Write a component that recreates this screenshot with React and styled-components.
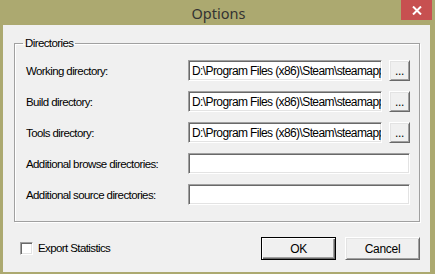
import React from "react";
import styled, { createGlobalStyle } from "styled-components";

const GlobalStyle = createGlobalStyle`
  html, body {
    margin: 0;
    padding: 0;
    background: #aba86f;
  }
`;

const Window = styled.div`
  width: 435px;
  height: 274px;
  box-sizing: border-box;
  background: #aca970;
  display: flex;
  flex-direction: column;
  padding: 0 5px 3px 3px;
  font-family: "Liberation Sans", Arial, sans-serif;
  font-size: 11.5px;
  letter-spacing: -0.6px;
  color: #000;
`;

const TitleBar = styled.div`
  height: 25px;
  display: grid;
  grid-template-columns: 1fr auto 1fr;
  align-items: start;
  margin: 0 -5px 0 -3px;
`;

const Title = styled.div`
  grid-column: 2;
  font-family: "Noto Sans", "Open Sans", sans-serif;
  font-size: 14.5px;
  letter-spacing: 0;
  line-height: 26px;
  color: #333;
  padding-left: 2px;
`;

const CloseButton = styled.div`
  grid-column: 3;
  justify-self: end;
  margin-right: 3px;
  width: 31px;
  height: 20px;
  background: #c75050;
  display: flex;
  align-items: center;
  justify-content: center;
`;

const Client = styled.div`
  flex: 1;
  background: #f0f0f0;
  display: flex;
  flex-direction: column;
  padding: 12px 10px 12px 11px;
`;

const Group = styled.fieldset`
  margin: 0;
  padding: 10px 9px 16px 11px;
  border: 1px solid #a0a0a0;
  box-shadow: inset 1px 1px 0 #fff, 1px 1px 0 #fff;
  display: grid;
  grid-template-columns: 155px 194px 21px;
  column-gap: 7px;
  row-gap: 10px;
  min-width: 0;
`;

const Legend = styled.legend`
  padding: 0 2px;
  margin-left: -3px;
  line-height: 13px;
`;

const Label = styled.div`
  height: 21px;
  display: flex;
  align-items: center;
  white-space: nowrap;
`;

const TextBox = styled.input`
  grid-column: ${(p) => (p.$wide ? "2 / 4" : "auto")};
  width: 100%;
  height: 21px;
  margin: 0;
  box-sizing: border-box;
  background: #fff;
  border-style: solid;
  border-width: 1px;
  border-color: #a0a0a0 #fff #fff #a0a0a0;
  box-shadow: inset 1px 1px 0 #696969, inset -1px -1px 0 #e3e3e3;
  padding: 0 0 0 3px;
  outline: none;
  color: #000;
  font-family: "Liberation Sans", Arial, sans-serif;
  font-size: 12px;
  letter-spacing: -0.6px;
`;

const Button = styled.div`
  box-sizing: border-box;
  width: ${(p) => p.$width || 75}px;
  height: ${(p) => p.$height || 23}px;
  background: #f0f0f0;
  border-style: solid;
  border-width: 1px;
  border-color: ${(p) =>
    p.$default ? "#000" : "#fff #696969 #696969 #fff"};
  box-shadow: ${(p) =>
    p.$default
      ? "inset 1px 1px 0 #fff, inset -1px -1px 0 #696969, inset -2px -2px 0 #a0a0a0"
      : "inset 1px 1px 0 #e3e3e3, inset -1px -1px 0 #a0a0a0"};
  display: flex;
  align-items: center;
  justify-content: center;
  font-size: 12px;
  letter-spacing: -0.3px;
`;

const Footer = styled.div`
  display: flex;
  align-items: center;
  margin-top: 15px;
  padding-left: 6px;
`;

const CheckRow = styled.label`
  display: flex;
  align-items: center;
  gap: 5px;
  flex: 1;
  margin-top: -1px;
`;

const CheckBox = styled.span`
  width: 13px;
  height: 13px;
  box-sizing: border-box;
  background: #fff;
  border-style: solid;
  border-width: 1px;
  border-color: #a0a0a0 #fff #fff #a0a0a0;
  box-shadow: inset 1px 1px 0 #696969, inset -1px -1px 0 #e3e3e3;
`;

const Buttons = styled.div`
  display: flex;
  gap: 9px;
`;

const steamPath = "D:\\Program Files (x86)\\Steam\\steamapps\\common";

const rows = [
  { label: "Working directory:", value: steamPath, browse: true },
  { label: "Build directory:", value: steamPath, browse: true },
  { label: "Tools directory:", value: steamPath, browse: true },
  { label: "Additional browse directories:", value: "", browse: false },
  { label: "Additional source directories:", value: "", browse: false },
];

export default function App() {
  return (
    <>
      <GlobalStyle />
      <Window>
        <TitleBar>
          <Title>Options</Title>
          <CloseButton>
            <svg width="10" height="9" viewBox="0 0 10 9">
              <path d="M1 0.5 L9 8.5 M9 0.5 L1 8.5" stroke="#fff" strokeWidth="2" />
            </svg>
          </CloseButton>
        </TitleBar>
        <Client>
          <Group>
            <Legend>Directories</Legend>
            {rows.map((r) => (
              <React.Fragment key={r.label}>
                <Label>{r.label}</Label>
                <TextBox $wide={!r.browse} value={r.value} readOnly />
                {r.browse && (
                  <Button $width={21} $height={21}>
                    ...
                  </Button>
                )}
              </React.Fragment>
            ))}
          </Group>
          <Footer>
            <CheckRow>
              <CheckBox />
              Export Statistics
            </CheckRow>
            <Buttons>
              <Button $default>OK</Button>
              <Button>Cancel</Button>
            </Buttons>
          </Footer>
        </Client>
      </Window>
    </>
  );
}
